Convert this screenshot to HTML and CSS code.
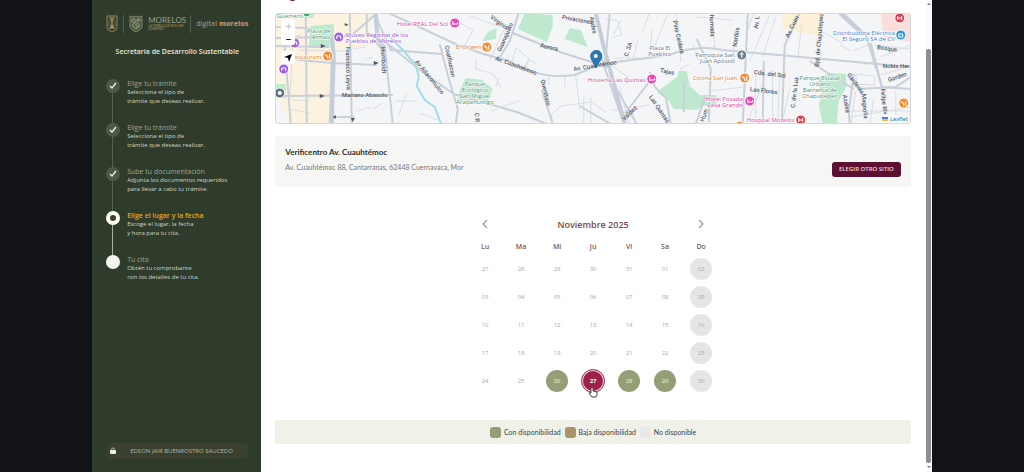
FILE: index.html
```
<!DOCTYPE html>
<html lang="es">
<head>
<meta charset="utf-8">
<title>Secretaría de Desarrollo Sustentable</title>
<link rel="stylesheet" href="styles.css">
</head>
<body>
<div class="app">
  <aside class="sidebar">
    <div class="brands">
      <svg class="brand-seal" viewBox="0 0 12 18" aria-hidden="true"><path d="M1 1h10v12q0 2-5 4Q1 15 1 13z" fill="none" stroke="#938563"/><path d="M3 3h6M4 5h4M6 5v8M3 13h6M4 11h4" stroke="#c5a673" stroke-width="1.2"/><path d="M3 6v5M9 6v5" stroke="#716d4b"/></svg>
      <span class="rule"></span>
      <svg class="brand-shield" viewBox="0 0 14 18" aria-hidden="true"><path d="M1 1l3 1 3-1 3 1 3-1v11q-1 3-6 5-5-2-6-5z" fill="#4a5842" stroke="#7b8368"/><path d="M3 4h3v3H3zM8 4h3v2H8zM4 9q3-3 6 0v3q-3 3-6 0zM6 10h2v3" fill="none" stroke="#969979"/></svg>
      <span class="state"><span class="state-name">MORELOS</span><span class="state-motto">LA TIERRA QUE NOS UNE</span><span class="state-gov">GOBIERNO</span></span>
      <span class="rule"></span>
      <span class="digital">digital <b>morelos</b></span>
    </div>
    <h1 class="agency">Secretaría de Desarrollo Sustentable</h1>
    <ol class="steps">
      <li class="step done"><span class="dot"><svg viewBox="0 0 14 14"><path d="M4 7l2 2 4-5"/></svg></span><div><h2>Elige tu trámite</h2><p>Selecciona el tipo de<br>trámite que deseas realizar.</p></div></li>
      <li class="step done"><span class="dot"><svg viewBox="0 0 14 14"><path d="M4 7l2 2 4-5"/></svg></span><div><h2>Elige tu trámite</h2><p>Selecciona el tipo de<br>trámite que deseas realizar.</p></div></li>
      <li class="step done"><span class="dot"><svg viewBox="0 0 14 14"><path d="M4 7l2 2 4-5"/></svg></span><div><h2>Sube tu documentación</h2><p>Adjunta los documentos requeridos<br>para llevar a cabo tu trámite.</p></div></li>
      <li class="step current"><span class="dot"></span><div><h2>Elige el lugar y la fecha</h2><p>Escoge el lugar, la fecha<br>y hora para tu cita.</p></div></li>
      <li class="step pending"><span class="dot"></span><div><h2>Tu cita</h2><p>Obtén tu comprobante<br>con los detalles de tu cita.</p></div></li>
    </ol>
    <div class="user"><svg viewBox="0 0 6 8" aria-hidden="true"><path d="M1.500 4V2.500a1.500 1.500 0 0 1 3 0V4" fill="none" stroke="#b9b9aa"/><rect y="3" width="6" height="4" rx="1" fill="#eeeee5"/></svg><span>EDSON JAIR BUENROSTRO SAUCEDO</span></div>
  </aside>

  <main class="content">
    <h2 class="page-title">Elige</h2>
    <section class="map" aria-label="Mapa">
      <svg class="tiles" viewBox="275 13 636 111" preserveAspectRatio="xMidYMid slice">
        <rect x="275" y="13" width="636" height="111" fill="#f4f5f7"/>
        <path d="M275 13H374L368 27 372 45 333 50 330 124H290L275 90z" fill="#fbf2df"/>
        <path d="M782 13h42l-7 22-34-6z" fill="#fbf0d5"/>
        <path d="M881 13h30v29l-27-4z" fill="#fbdedb"/>
        <g fill="#bfe9cf">
          <path d="M311 26l23-2 1 23-26 1zM275 84h11v14h-11zM302 13h13l-2 5h-10z"/>
          <path d="M525 13l28 2v11l-6 16-29-13zM570 28l11 2 7 17-23-8zM488 32l9-4-1 11-13 2z"/>
          <path d="M466 78l16 2 11 9-5 13-30-1 2-11zM657 92l20-15 2-6h8l3 15 10 9h17v10l-14 1-6 4-23-1-5-8z"/>
          <path d="M817 78l15-5 14 1 1 12-8 15-2 23h-14l-4-19 3-10z"/>
        </g>
        <g fill="none" stroke="#d9dde3" stroke-width="1">
          <path d="M276 38l25-3M293 100l15 1M290 109l20 4M353 49l13-2M366 60l7-3M373 109l10-6M332 117h22M357 111l14-4M395 101h22M407 93l-8 22M420 113l18 7M455 20l18 10-10 20M470 16l31 11M504 30l-14 31M476 58v11l18 5 7 13M499 77l-3 10M492 111l29-11M516 48l-4 15 12 7 5-12zM524 71l5-11 8 4M549 77v8M565 77v10M576 76l4 33M552 124v-10l9-8 30-4 15 10M584 97v27M591 97v27M606 19l12 2 4 14-9 2M621 21l-7 13M620 87l9 37M615 58h25M609 63l21 16M650 13l-8 20M652 30l-2 28M622 110h-11M635 107l15-2M638 40l-5 20M680 69l10-5M693 44l5 16M697 17l35 3M712 13l3 35M735 30l-2 30M711 91l32-4M754 13l-6 17M762 86l-15 38M780 74l-2 50M790 89l-8 35M802 23l-4 35M776 17l-13 40M819 30l24 13M840 45l10 5M857 84l18 1v-9l-19-2zM865 65l13-6M856 91l-5 33M874 98l-4 26M850 111h61M851 117l60-10M896 91v33"/>
          <path d="M668 13l-14 36M677 13l4 49M773 70v54M756 73v51M770 15l-20 46M873 43l-20 8M874 45l37 4M881 57l30-12M881 75l30-9M300 50l52 1M295 13l-5 85"/>
        </g>
        <g fill="none" stroke="#c9d0d9" stroke-width="2">
          <path d="M275 38l55-1 21-1 24-21M275 46l54 1M290 59l42 4 45 2M283 96l110-1M275 27l34 1M306 13l1 111M284 35l7 89M350 13l2 111M332 56l-2 68M376 20q-1 20 9 26l8 78M337 117h18M367 13v21M375 15l16 35 51 4"/>
          <path d="M389 13l69 32q29 11 52 16 29 19 65 14l26-11q40-5 68-9 29-11 53-5l189 17M440 44l8 31 10 34-2 15M382 39l38 31 34 24 63 18 30 12M519 13l-9 28-12 20M513 33l50 20 48 15M542 90l11 34M610 13l-5 54M611 79l26 45M599 50l25 74M653 77l-28 37M650 72l5 15 11 10 5 27M697 39l14 30-2 53M748 13l-5 111M764 61l-1 63M800 13l-15 32-3 79M810 61l18 12 26 16M854 74l-5 37 1 13M871 43l11 44 30 2"/>
          <path d="M843 13l23 22 16 51M858 89l38-2 15-10M684 82v30M706 95l-10 29M580 106l31 18"/>
        </g>
        <path d="M332 35l2 21-2 68M376 13l2 30 7 8M596 13l7 30 22 81M840 13l20 18" fill="none" stroke="#c5ced8" stroke-width="4"/>
        <path d="M391 38l13 13 12 14 3 12-2 9 8 14 10 7 6 16" fill="none" stroke="#a4dcec" stroke-width="2"/>
        <g fill="#4f5663"><path d="M321 44l5 2-5 2zM320 94l5 2-5 2zM374 61l5 2-5 2zM336 115v4l-3-2zM351 118h4l-2 4zM345 23l4 2-4 1z"/></g>
        <g class="street">
          <text transform="translate(346 47) rotate(89)">Francisco Leyva</text>
          <text transform="translate(381 47) rotate(87)">Humboldt</text>
          <text x="342" y="97">Mariano Abasolo</text>
          <text transform="translate(415 62) rotate(51)">Av Atlacomulco</text>
          <text transform="translate(445 46) rotate(78)">Coatlhuican</text>
          <text transform="translate(490 18) rotate(36)">Virginia</text>
          <text transform="translate(501 52) rotate(-66)">Guanajuato</text>
          <text transform="translate(495 60) rotate(20)">Av. Cuauhtémoc</text>
          <text transform="translate(540 47) rotate(13)">Aurora</text>
          <text transform="translate(541 80) rotate(77)">Querétaro</text>
          <text transform="translate(562 19) rotate(10)">Privaciones</text>
          <text transform="translate(590 17) rotate(80)">Andes</text>
          <text transform="translate(574 71) rotate(-9)">Av. Cuauhtémoc</text>
          <text transform="translate(628 57) rotate(-72)">C. 3A</text>
          <text transform="translate(673 21) rotate(77)">Pino Caldera</text>
          <text transform="translate(710 15) rotate(88)">humada</text>
          <text transform="translate(737 47) rotate(-82)">Nardos</text>
          <text transform="translate(660 72) rotate(12)">Tajas</text>
          <text transform="translate(649 97) rotate(56)">Las Quintas</text>
          <text transform="translate(625 121) rotate(-46)">Valdez</text>
          <text transform="translate(704 122) rotate(-70)">Hum</text>
          <text transform="translate(758 29) rotate(-82)">Av. L</text>
          <text transform="translate(789 38) rotate(-65)">Av. Cuau</text>
          <text transform="translate(819 67) rotate(-85)">Bjd. de Chapultepec</text>
          <text transform="translate(754 74) rotate(7)">Cda. del Sol</text>
          <text transform="translate(750 91) rotate(7)">Las Flores</text>
          <text transform="translate(795 108) rotate(-83)">C. de la Luz</text>
          <text transform="translate(847 75) rotate(53)">Gardenia</text>
          <text transform="translate(843 95) rotate(80)">Azalea</text>
          <text transform="translate(862 94) rotate(85)">Magnolia</text>
          <text transform="translate(881 89) rotate(84)">Felipe Riv</text>
          <text transform="translate(877 49) rotate(8)">Bosque</text>
          <text x="883" y="68">Nobis Her</text>
          <text transform="translate(889 82) rotate(-19)">Garden</text>
          <text transform="translate(475 113) rotate(85)">C R</text>
        </g>
        <g class="place park"><text x="277" y="18">Guerrero</text><text x="319" y="33" text-anchor="middle">Plaza de</text><text x="321" y="39" text-anchor="middle">Armas</text><text x="475" y="86" text-anchor="middle">Parque</text><text x="475" y="92" text-anchor="middle">Ecológico</text><text x="475" y="98" text-anchor="middle">San Miguel</text><text x="475" y="104" text-anchor="middle">Acapantzingo</text><text x="820" y="80" text-anchor="middle">Parque Estatal</text><text x="820" y="86" text-anchor="middle">Urbano</text><text x="820" y="92" text-anchor="middle">Barranca de</text><text x="820" y="98" text-anchor="middle">Chapultepec</text></g>
        <g class="place museum"><text x="346" y="37">Museo Regional de los</text><text x="346" y="43">Pueblos de Morelos</text></g>
        <g class="place food"><text x="322" y="59" text-anchor="end">Restaurant</text><text x="456" y="49">El Origen</text><text x="693" y="80">Cocina San Juan</text></g>
        <g class="place hotel"><text x="397" y="26">Hotel REAL Del Sol</text><text x="588" y="82">Hosteria Las Quintas</text><text x="743" y="101" text-anchor="end">Hotel Posada</text><text x="743" y="107" text-anchor="end">Casa Grande</text><text x="747" y="122">Hospital Morelos</text></g>
        <g class="place shop"><text x="895" y="35" text-anchor="end">Distribuidora Eléctrica</text><text x="895" y="41" text-anchor="end">El Seguro SA de CV</text></g>
        <g class="place plain"><text x="660" y="50" text-anchor="middle">Plaza El</text><text x="660" y="56" text-anchor="middle">Pueblito</text><text x="735" y="57" text-anchor="end">Parroquia San</text><text x="735" y="63" text-anchor="end">Juan Apóstol</text></g>
        <g stroke="#fff" stroke-width="1">
          <g fill="#a05fe8"><circle cx="339" cy="37" r="5"/><circle cx="295" cy="43" r="5"/><circle cx="284" cy="69" r="5"/></g>
          <g fill="#f28a2e"><circle cx="328" cy="56" r="5"/><circle cx="487" cy="47" r="5"/><circle cx="745" cy="78" r="5"/><circle cx="904" cy="103" r="5"/><circle cx="740" cy="125" r="4"/></g>
          <g fill="#ec45b6"><circle cx="455" cy="23" r="5"/><circle cx="652" cy="79" r="5"/><circle cx="750" cy="101" r="5"/></g>
          <g fill="#dd3f50"><circle cx="900" cy="18" r="5"/><circle cx="801" cy="120" r="5"/></g>
          <circle cx="901" cy="35" r="5" fill="#2598df"/><circle cx="742" cy="55" r="5" fill="#6e7f8f"/><circle cx="280" cy="93" r="5" fill="#5f7080"/><circle cx="307" cy="13" r="4" fill="#36a884"/>
        </g>
        <g fill="none" stroke="#fff"><path d="M337 39v-3h4v3M293 45v-3h4v3M282 71v-3h4v3M326 54v2h2v3M330 54v5M485 45v2h2v3M489 45v5M743 76v2h2v3M747 76v5M902 101v2h2v3M906 101v5M453 21v4M453 24h5v-2M650 77v4M650 80h5v-2M748 99v4M748 102h5v-2M898 16v4M902 16v4M898 18h4M799 118v4M803 118v4M799 120h4M899 34h4v3h-4zM742 52v6M740 54h4"/></g><circle cx="280" cy="93" r="2" fill="#fff"/>
        <path d="M596 68C594 62 591 60 591 56a5 5 0 0 1 11 0c0 4-4 7-6 12z" fill="#2878b7" stroke="#1e67a5"/><circle cx="596" cy="56" r="2" fill="#fff"/>
      </svg>
      <div class="controls"><div class="zoom"><button type="button" disabled aria-label="Acercar">+</button><button type="button" aria-label="Alejar">−</button></div><button type="button" class="locate" aria-label="Mi ubicación"><svg viewBox="0 0 12 12"><path d="M10 2L7 10 6 6 2 5z"/></svg></button></div>
      <a class="leaflet" href="#"><svg viewBox="0 0 6 4"><path d="M0 0h6v2H0z" fill="#4c7be1"/><path d="M0 2h6v2H0z" fill="#e0c83f"/></svg>Leaflet</a>
    </section>

    <section class="site">
      <div><h3>Verificentro Av. Cuauhtémoc</h3><p>Av. Cuauhtémoc 88, Cantarranas, 62448 Cuernavaca, Mor</p></div>
      <button type="button">ELEGIR OTRO SITIO</button>
    </section>

    <section class="calendar">
      <header><button type="button" aria-label="Mes anterior"><svg viewBox="0 0 8 10"><path d="M6 1L2 5l4 4"/></svg></button><h3>Noviembre 2025</h3><button type="button" aria-label="Mes siguiente"><svg viewBox="0 0 8 10"><path d="M2 1l4 4-4 4"/></svg></button></header>
      <table>
        <thead><tr><th>Lu</th><th>Ma</th><th>Mi</th><th>Ju</th><th>Vi</th><th>Sa</th><th>Do</th></tr></thead>
        <tbody>
          <tr><td>27</td><td>28</td><td>29</td><td>30</td><td>31</td><td>01</td><td><button type="button" class="day" disabled>02</button></td></tr>
          <tr><td>03</td><td>04</td><td>05</td><td>06</td><td>07</td><td>08</td><td><button type="button" class="day" disabled>09</button></td></tr>
          <tr><td>10</td><td>11</td><td>12</td><td>13</td><td>14</td><td>15</td><td><button type="button" class="day" disabled>16</button></td></tr>
          <tr><td>17</td><td>18</td><td>19</td><td>20</td><td>21</td><td>22</td><td><button type="button" class="day" disabled>23</button></td></tr>
          <tr><td>24</td><td>25</td><td><button type="button" class="day open">26</button></td><td class="picked"><button type="button" class="day selected">27</button><svg class="pointer" viewBox="0 0 10 12" aria-hidden="true"><path d="M3 7V2q1-2 2 0v3l4 1v3l-1 2H4L1 7q0-1 2 0z" fill="#fff" stroke="#444"/></svg></td><td><button type="button" class="day open">28</button></td><td><button type="button" class="day open">29</button></td><td><button type="button" class="day" disabled>30</button></td></tr>
        </tbody>
      </table>
    </section>

    <ul class="legend"><li class="high">Con disponibilidad</li><li class="low">Baja disponibilidad</li><li class="none">No disponible</li></ul>
  </main>
  <div class="scrollbar" aria-hidden="true"><svg viewBox="0 0 6 4"><path d="M1 3l2-2 2 2z"/></svg><span></span><svg viewBox="0 0 6 4"><path d="M1 1l2 2 2-2z"/></svg></div>
</div>
</body>
</html>
```
FILE: styles.css
```
* { box-sizing: border-box; }
body { margin: 0; background: #111318; color: #333; font: 7px/9px Lato, "Noto Sans", sans-serif; }
h1, h2, h3, p, ol, ul { margin: 0; padding: 0; font-size: inherit; }
ol, ul { list-style: none; }
button { font: inherit; border: 0; padding: 0; cursor: pointer; }
svg { display: block; }

.app { display: flex; height: 100vh; margin: 0 9%; background: #fff; overflow: hidden; }

.sidebar { flex: 0 0 168px; display: flex; flex-direction: column; padding: 14px 13px 13px 14px; background: #2f3c2b; color: #d0d5c8; }
.brands { display: flex; align-items: center; gap: 5px; height: 19px; color: #9a9f86; white-space: nowrap; }
.brand-seal { flex: none; width: 12px; height: 18px; }
.brand-shield { flex: none; width: 14px; height: 18px; }
.rule { flex: none; width: 1px; height: 18px; background: #56604c; }
.state { display: flex; flex-direction: column; width: 37px; }
.state-name { font-size: 8px; line-height: 9px; }
.state-motto { font-size: 3px; line-height: 3px; color: #b19760; }
.state-gov { font-size: 3px; line-height: 3px; }
.digital { font: 600 7px/9px "Open Sans", sans-serif; color: #88907d; }
.digital b { color: #bd8968; }
.agency { margin-top: 14px; font: 600 7px/10px "Open Sans", sans-serif; text-align: center; white-space: nowrap; color: #e5e9de; }

.steps { margin-top: 22px; }
.step { position: relative; display: flex; gap: 7px; height: 44px; font-size: 7px; white-space: nowrap; }
.step h2 { font: 500 7px/9px "Open Sans", sans-serif; color: #9ca58e; }
.step:not(:last-child)::before { content: ""; position: absolute; left: 6px; top: 6px; width: 1px; height: 44px; background: #53634e; }
.step.current:not(:last-child)::before { background: #a9b0a3; }
.dot { position: relative; flex: none; width: 14px; height: 14px; border-radius: 50%; background: #f5f5f0; }
.done .dot { background: #4b5b48; }
.dot path { fill: none; stroke: #eef1e8; stroke-width: 1.3; }
.current .dot { border: 4px solid #fffff4; background: #35432f; }
.step.current h2 { color: #e0a81a; font-weight: 600; }
.step p { font: 6px/9px "Open Sans", sans-serif; }

.user { display: flex; align-items: center; gap: 14px; height: 16px; margin-top: auto; padding-left: 4px; border-radius: 3px; background: #39402d; color: #b5b9aa; font: 6px/9px "Open Sans", sans-serif; white-space: nowrap; }
.user svg { width: 6px; height: 8px; }

.content { flex: 1; min-width: 0; padding: 0 15px 0 14px; overflow: hidden; }
.page-title { height: 18px; margin-top: -18px; font-size: 13px; line-height: 24px; color: #6b2c3c; }

.map { position: relative; height: 111px; margin-top: 13px; outline: 1px solid #d5d8dc; outline-offset: -1px; border-radius: 3px; overflow: hidden; }
.tiles { width: 100%; height: 100%; }
.street text { font: 500 6px Roboto, sans-serif; fill: #535a68; }
.place text { font: 500 6px "Open Sans", sans-serif; stroke: #fff; stroke-width: 1px; paint-order: stroke; }
.park { fill: #489072; }
.museum { fill: #8450c8; }
.food { fill: #e27c28; }
.hotel { fill: #dc3ea8; }
.shop { fill: #477bcc; }
.plain { fill: #68788a; }
.controls { position: absolute; left: 6px; top: 6px; display: grid; gap: 6px; }
.zoom { display: grid; }
.controls button { width: 14px; height: 13px; background: #fff; font-size: 11px; line-height: 12px; font-weight: 600; color: #222; border-radius: 2px; }
.controls button:disabled { color: #bbb; font-weight: 400; }
.locate svg { width: 12px; height: 12px; margin: auto; }
.leaflet { position: absolute; right: 2px; bottom: 1px; display: flex; align-items: center; gap: 2px; padding: 0 1px; background: #f8f9fa; color: #2b7dad; font-size: 6px; line-height: 8px; text-decoration: none; }
.leaflet svg { width: 6px; height: 4px; }

.site { display: flex; justify-content: space-between; align-items: flex-end; min-height: 51px; margin-top: 12px; padding: 10px; border-radius: 3px; background: #f6f6f4; }
.site > div { align-self: flex-start; }
.site h3 { font-size: 8px; line-height: 12px; font-weight: 700; color: #2b2b2b; }
.site p { margin-top: 4px; line-height: 10px; color: #777; }
.site button { height: 15px; padding: 0 7px; border-radius: 3px; background: #5c1032; color: #f1dce5; font: 600 6px/9px "Open Sans", sans-serif; }

.calendar { width: 252px; margin: 29px auto 0; font-family: "Open Sans", sans-serif; }
.calendar header { display: flex; align-items: center; justify-content: space-between; height: 16px; padding: 0 14px; }
.calendar header button { background: none; }
.calendar header svg { width: 8px; height: 10px; fill: none; stroke: #999; stroke-width: 1.2; }
.calendar h3 { font-size: 9px; font-weight: 600; color: #754b4c; }
.calendar table { width: 100%; table-layout: fixed; border-collapse: collapse; text-align: center; }
.calendar th { height: 23px; padding: 6px 0 0; font-weight: 600; color: #765a5d; }
.calendar td { height: 28px; padding: 0; font-size: 6px; color: #a9a9a9; }
.day { display: block; width: 22px; height: 22px; margin: 0 auto; border-radius: 50%; background: #e5e5e5; color: #aaa; }
.day.open { background: #93a077; color: #edf1df; }
.day.selected { width: 24px; height: 24px; background: #9d2148; border: 1px solid #ac4565; box-shadow: inset 0 0 0 1px #f4dde4; color: #fff; font-weight: 700; }
.picked { position: relative; }
.pointer { position: absolute; left: 13px; top: 19px; width: 10px; height: 12px; }

.legend { display: flex; justify-content: center; align-items: center; gap: 4px; height: 24px; margin-top: 25px; border-radius: 2px; background: #f0f1e9; color: #444; white-space: nowrap; }
.legend li { display: flex; align-items: center; gap: 3px; }
.legend li::before { content: ""; width: 11px; height: 11px; border-radius: 3px; background: #93a077; }
.legend .low::before { background: #a99467; }
.legend .none::before { background: #e8e8e8; }

.scrollbar { flex: 0 0 6px; display: flex; flex-direction: column; align-items: center; padding: 2px 0 3px; background: #fafafa; }
.scrollbar svg { width: 6px; height: 4px; fill: #777; }
.scrollbar span { flex: 1; width: 5px; margin: 43px 0 2px; border-radius: 2px; background: #8e908f; }
```
